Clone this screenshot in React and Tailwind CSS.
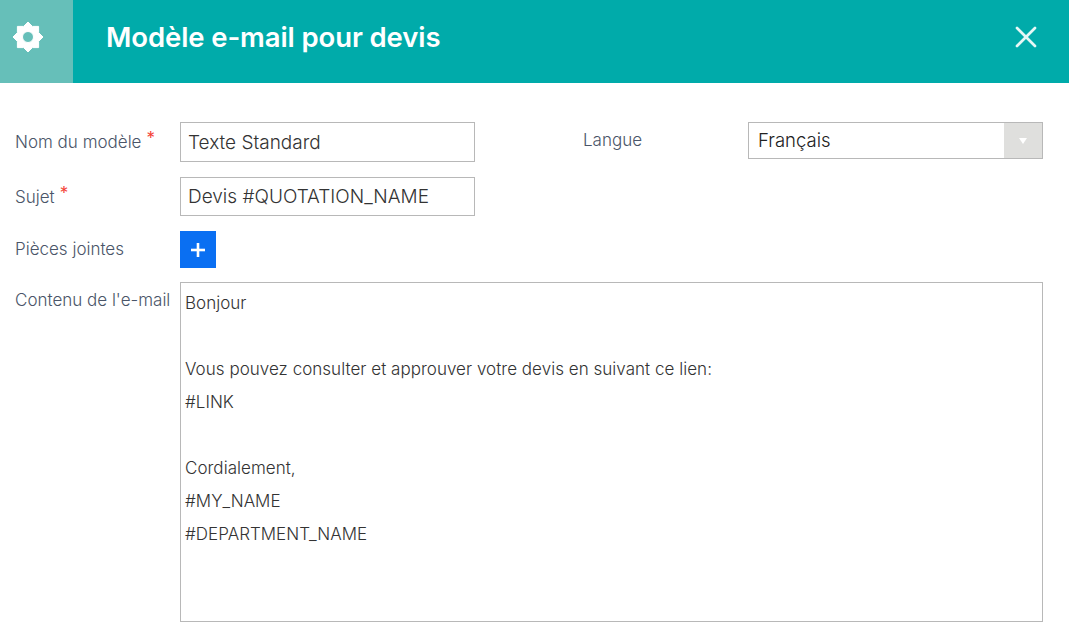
import { X, Plus } from 'lucide-react';

const bodyLines = [
  'Bonjour',
  '',
  'Vous pouvez consulter et approuver votre devis en suivant ce lien:',
  '#LINK',
  '',
  'Cordialement,',
  '#MY_NAME',
  '#DEPARTMENT_NAME',
];

function GearIcon() {
  return (
    <svg width="32" height="32" viewBox="0 0 32 32" fill="white">
      <path
        fillRule="evenodd"
        d="M16 1 L20.4 5.4 L26.6 5.4 L26.6 11.6 L31 16 L26.6 20.4 L26.6 26.6 L20.4 26.6 L16 31 L11.6 26.6 L5.4 26.6 L5.4 20.4 L1 16 L5.4 11.6 L5.4 5.4 L11.6 5.4 Z M16 10.5 A5.5 5.5 0 1 0 16 21.5 A5.5 5.5 0 1 0 16 10.5 Z"
        stroke="white"
        strokeWidth="1"
        strokeLinejoin="round"
      />
    </svg>
  );
}

function Label({ children, required }) {
  return (
    <span className="text-[#4a5568] text-[17px] leading-none font-light">
      {children}
      {required && <span className="text-[#f44336] ml-[5px] relative -top-1 font-normal">*</span>}
    </span>
  );
}

function App() {
  return (
    <div className="w-[1069px] h-[639px] bg-white overflow-hidden font-['Inter','Liberation_Sans',sans-serif]">
      <header className="flex h-[83px] bg-[#00abaa]">
        <div className="w-[73px] h-full bg-[#66bfb9] flex items-center pl-[12px] pb-[9px]">
          <GearIcon />
        </div>
        <div className="flex-1 flex items-center pb-[9px]">
          <h1 className="ml-[33px] pt-[2px] text-white text-[27.5px] leading-none font-semibold flex-1 tracking-[-0.1px]">Modèle e-mail pour devis</h1>
          <X size={36} color="#e6f7f6" strokeWidth={1.8} className="mr-[25px]" />
        </div>
      </header>
      <main className="pl-[15px] pr-[26px] pt-[39px]">
        <div className="flex items-start h-[40px]">
          <div className="w-[165px] h-[40px] flex items-center"><Label required>Nom du modèle</Label></div>
          <div className="w-[295px] h-[40px] border border-[#b8b8b8] pl-[7px] pt-[2px] flex items-center text-[19px] font-light text-[#333]">Texte Standard</div>
          <div className="ml-[108px] w-[165px] h-[38px] flex items-center text-[17px] font-light text-[#4a5568]">Langue</div>
          <div className="flex-1 h-[37px] border border-[#b8b8b8] flex items-center justify-between pl-[9px] text-[18.5px] font-light text-[#222]">
            Français
            <span className="w-[38px] h-full bg-[#dfdfdd] flex items-center justify-center">
              <span className="w-0 h-0 border-x-[4.5px] border-x-transparent border-t-[6px] border-t-white" />
            </span>
          </div>
        </div>
        <div className="flex items-center h-[39px] mt-[15px]">
          <div className="w-[165px]"><Label required>Sujet</Label></div>
          <div className="w-[295px] h-[39px] border border-[#b8b8b8] pl-[7px] pt-[2px] flex items-center text-[19px] font-light text-[#333]">Devis #QUOTATION_NAME</div>
        </div>
        <div className="flex items-center h-[37px] mt-[15px]">
          <div className="w-[165px] pb-[2px]"><Label>Pièces jointes</Label></div>
          <div className="w-[36px] h-[37px] bg-[#0a6ff2] flex items-center justify-center">
            <Plus size={24} color="white" strokeWidth={2.6} strokeLinecap="butt" />
          </div>
        </div>
        <div className="flex mt-[14px]">
          <div className="w-[165px] pt-[6px]"><Label>Contenu de l'e-mail</Label></div>
          <div className="flex-1 h-[340px] border border-[#b8b8b8] px-[4px] pt-[4px] text-[17px] tracking-[0.03px] font-light text-[#333]">
            {bodyLines.map((line, i) => (
              <div key={i} className="h-[33px] leading-[33px]">{line}</div>
            ))}
          </div>
        </div>
      </main>
    </div>
  );
}

export default App;
